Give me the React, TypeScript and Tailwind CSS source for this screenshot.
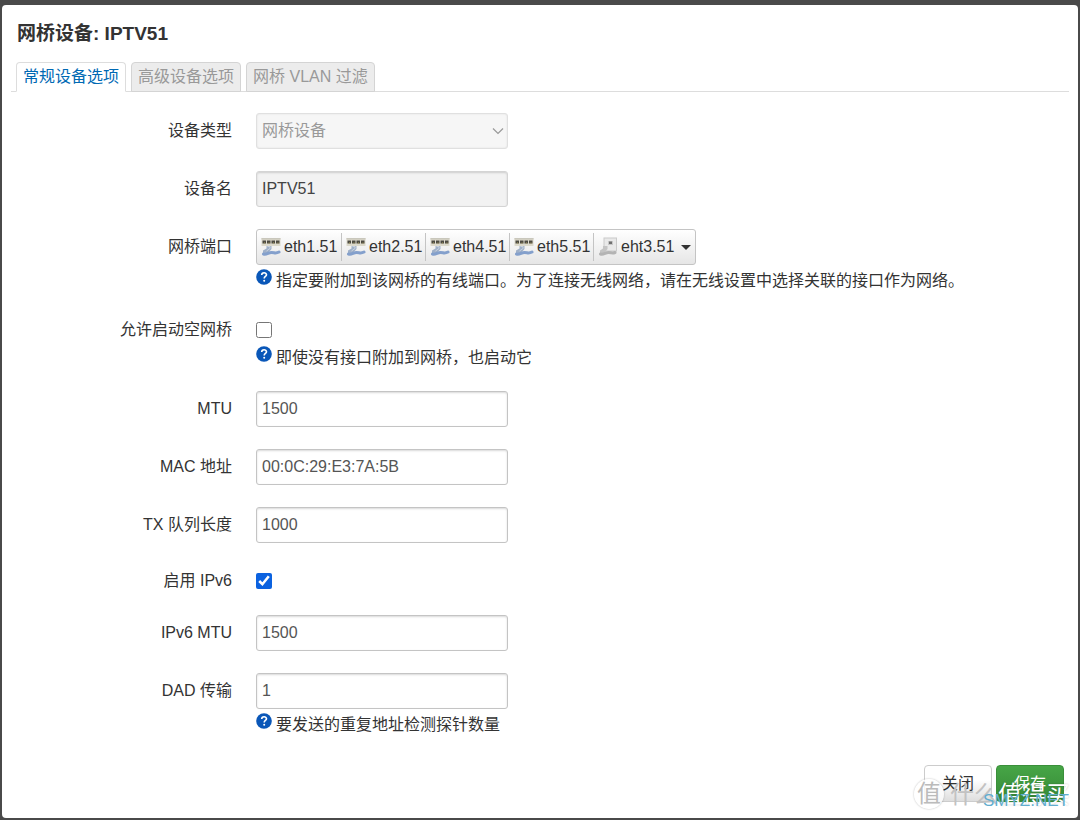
import { useId, type ReactNode } from "react";

const ports = [
  { name: "eth1.51", active: true },
  { name: "eth2.51", active: true },
  { name: "eth4.51", active: true },
  { name: "eth5.51", active: true },
  { name: "eht3.51", active: false },
];

const inputClass =
  "h-9 w-full rounded-[3px] border border-[#c4c4c4] bg-white px-[5px] text-base text-[#555] shadow-[inset_0_1px_2px_rgba(0,0,0,0.15)] outline-none";

function SwitchIcon() {
  return (
    <svg className="h-5 w-5 shrink-0" viewBox="0 0 20 20" aria-hidden="true">
      <rect x="0.5" y="1" width="19" height="8" fill="#dcd9cb" />
      <rect x="0.5" y="1" width="19" height="1.5" fill="#c9c7bc" />
      <path d="M1.5 3.5h3.5v3h-3.5z M6 3.5h3.5v3H6z M10.5 3.5H14v3h-3.5z M15 3.5h3.5v3H15z" fill="#4c4a42" />
      <path d="M3 5.5h1v1H3z M7.5 5.5h1v1h-1z M12 5.5h1v1h-1z M16.5 5.5h1v1h-1z" fill="#a89b5a" />
      <path d="M5.5 9h5v3l-3.5 4H2v-2.5l3.5-2z" fill="#9fb0c8" />
      <path d="M2.5 17c3 1 5-1.5 8-1.5s4 1.5 7.5-.5" fill="none" stroke="#84a0cc" strokeWidth="3" strokeLinecap="round" />
      <path d="M6.5 9.5H9v2L5.5 14" fill="none" stroke="#c9d3e1" strokeWidth="1" />
    </svg>
  );
}

function PortIcon() {
  return (
    <svg className="h-5 w-5 shrink-0" viewBox="0 0 20 20" aria-hidden="true">
      <rect x="6" y="1" width="12.5" height="13" fill="#e9e9e9" stroke="#cacaca" />
      <rect x="10" y="4" width="5" height="4" fill="#c8c8c8" />
      <rect x="11" y="4.5" width="3" height="2.5" fill="#707070" />
      <path d="M5 9h4.5v3l-3 4H2v-2.5l3-2z" fill="#c4c4c4" />
      <path d="M2.5 17c3 1 5-1.5 8-1.5s4 1 6.500 0" fill="none" stroke="#b4b4b4" strokeWidth="3" strokeLinecap="round" />
    </svg>
  );
}

function HelpText({ children }: { children: ReactNode }) {
  return (
    <div className="flex items-start gap-1 pt-1">
      <svg className="h-4 w-4 shrink-0" viewBox="0 0 16 16" aria-hidden="true">
        <circle cx="8" cy="8" r="7.8" fill="#0a57b8" />
        <path d="M5.7 6.1c0-3.1 4.8-3 4.8-.3 0 1.7-2.3 1.7-2.3 3.6" fill="none" stroke="#fff" strokeWidth="1.6" />
        <circle cx="8.2" cy="11.8" r="1" fill="#fff" />
      </svg>
      <p className="leading-[23px]">{children}</p>
    </div>
  );
}

type FieldProps = {
  label: string;
  help?: string;
  compact?: boolean;
  wide?: boolean;
  children: (id: string) => ReactNode;
};

function Field({ label, help, compact, wide, children }: FieldProps) {
  const id = useId();
  const line = compact ? "flex h-7 items-center pt-1" : "flex h-9 items-center";
  return (
    <div className="flex gap-6">
      <label htmlFor={id} className={`${line} w-[216px] shrink-0 justify-end`}>
        {label}
      </label>
      <div className="min-w-0 flex-1">
        <div className={`${line} ${wide ? "" : "max-w-[252px]"}`}>{children(id)}</div>
        {help && <HelpText>{help}</HelpText>}
      </div>
    </div>
  );
}

function TextField({ label, value, help }: { label: string; value: string; help?: string }) {
  return (
    <Field label={label} help={help}>
      {(id) => <input id={id} type="text" defaultValue={value} className={inputClass} />}
    </Field>
  );
}

function Tabs() {
  const base = "-mb-px h-[30px] rounded-t border px-[6px] text-base";
  return (
    <div role="tablist" className="mx-[9px] flex gap-[5px] border-b border-[#ddd] px-[5px]">
      <button role="tab" aria-selected="true" className={`${base} border-[#ddd] border-b-white bg-white text-[#0069b4]`}>
        常规设备选项
      </button>
      <button role="tab" aria-selected="false" className={`${base} border-[#d4d4d4] bg-[#ececec] text-[#999]`}>
        高级设备选项
      </button>
      <button role="tab" aria-selected="false" className={`${base} border-[#d4d4d4] bg-[#ececec] text-[#999]`}>
        网桥 VLAN 过滤
      </button>
    </div>
  );
}

// Site mark laid over the footer buttons
function Watermark() {
  return (
    <div className="pointer-events-none absolute top-0 right-2 h-12 w-40 select-none" aria-hidden="true">
      <span className="absolute top-[14px] left-1 flex h-[30px] w-[30px] items-center justify-center rounded-full bg-white/80 text-2xl leading-none text-[#bbb] shadow-[0_0_2px_rgba(0,0,0,0.3)]">
        值
      </span>
      <span className="absolute top-[14px] left-10 text-2xl leading-8 whitespace-nowrap text-[#c2c2c2]">
        什么<span className="text-white [text-shadow:0_0_2px_rgba(0,0,0,0.25)]">值得买</span>
      </span>
      <span className="absolute top-[26px] left-[73px] text-[17px] leading-5 text-[#62adcf]">SMYZ.NET</span>
    </div>
  );
}

export default function App() {
  return (
    <div className="flex min-h-screen flex-col bg-[#4a4a4a] px-[2px] pt-[5px] pb-[2px] font-['Liberation_Sans','Noto_Sans_CJK_SC',sans-serif] text-base text-[#333]">
      <main className="flex-1 rounded bg-white">
        <h1 className="px-[15px] pt-[15px] pb-[14px] text-[19px] leading-7 font-bold">网桥设备: IPTV51</h1>
        <Tabs />
        <form className="px-[14px] pt-[21px]" onSubmit={(e) => e.preventDefault()}>
          <div className="flex flex-col gap-[22px]">
            <Field label="设备类型">
              {(id) => (
                <div className="relative w-full">
                  <select
                    id={id}
                    disabled
                    className="h-9 w-full appearance-none rounded-[3px] border border-[#e0e0e0] bg-[#f6f6f6] px-[5px] text-base text-[#999] opacity-100 shadow-[inset_0_0_2px_rgba(0,0,0,0.1)]"
                  >
                    <option>网桥设备</option>
                  </select>
                  <svg className="absolute top-3 right-1 h-3 w-3" viewBox="0 0 12 12" aria-hidden="true">
                    <path d="M1 3.5l5 5 5-5" fill="none" stroke="#999" strokeWidth="1.2" />
                  </svg>
                </div>
              )}
            </Field>
            <Field label="设备名">
              {(id) => (
                <input
                  id={id}
                  type="text"
                  readOnly
                  defaultValue="IPTV51"
                  className="h-9 w-full rounded-[3px] border border-[#d4d4d4] bg-[#f2f2f2] px-[5px] text-base text-[#444] shadow-[inset_0_1px_2px_rgba(0,0,0,0.15)] outline-none"
                />
              )}
            </Field>
            <Field
              label="网桥端口"
              wide
              help="指定要附加到该网桥的有线端口。为了连接无线网络，请在无线设置中选择关联的接口作为网络。"
            >
              {(id) => (
                <button
                  id={id}
                  type="button"
                  className="flex h-9 items-center rounded-[3px] border border-[#c4c4c4] bg-linear-to-b from-white to-[#e6e6e6] pr-1"
                >
                  {ports.map((port) => (
                    <span
                      key={port.name}
                      className="flex h-7 w-[84px] items-center gap-[3px] border-l border-[#c4c4c4] pl-1 first:border-l-0"
                    >
                      {port.active ? <SwitchIcon /> : <PortIcon />}
                      {port.name}
                    </span>
                  ))}
                  <svg className="ml-1 h-[5px] w-[10px]" viewBox="0 0 10 5" aria-hidden="true">
                    <path d="M0 0h10L5 5z" fill="#333" />
                  </svg>
                </button>
              )}
            </Field>
            <Field label="允许启动空网桥" compact help="即使没有接口附加到网桥，也启动它">
              {(id) => <input id={id} type="checkbox" className="h-4 w-4" />}
            </Field>
            <TextField label="MTU" value="1500" />
            <TextField label="MAC 地址" value="00:0C:29:E3:7A:5B" />
            <TextField label="TX 队列长度" value="1000" />
            <Field label="启用 IPv6" compact>
              {(id) => <input id={id} type="checkbox" defaultChecked className="h-4 w-4 accent-[#0b62e0]" />}
            </Field>
            <TextField label="IPv6 MTU" value="1500" />
            <TextField label="DAD 传输" value="1" help="要发送的重复地址检测探针数量" />
          </div>
        </form>
        <footer className="relative mt-[29px] flex justify-end gap-1 px-[14px] pb-3">
          <button
            type="button"
            className="h-[37px] w-[68px] rounded border border-[#ccc] bg-linear-to-b from-white from-40% to-[#dedede] text-base"
          >
            关闭
          </button>
          <button
            type="button"
            className="h-[37px] w-[68px] rounded border border-[#3a8f3a] bg-linear-to-b from-[#46a546] to-[#378a37] text-base text-white"
          >
            保存
          </button>
          <Watermark />
        </footer>
      </main>
    </div>
  );
}
